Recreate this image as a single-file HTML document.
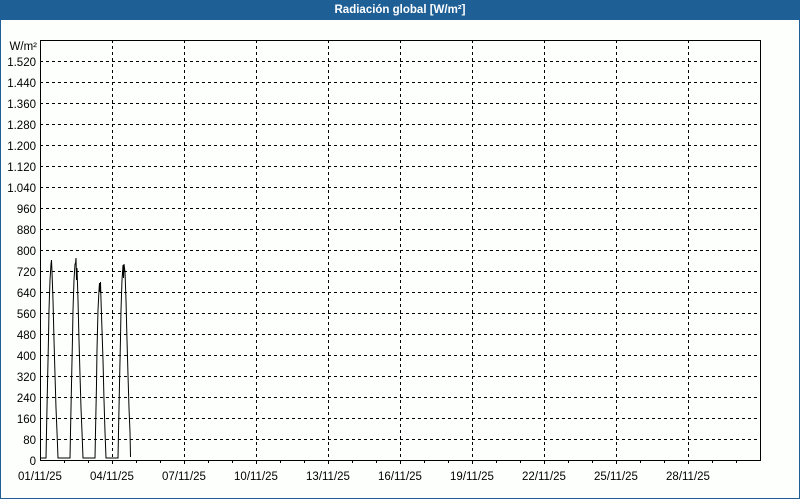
<!DOCTYPE html>
<html><head><meta charset="utf-8"><style>
html,body{margin:0;padding:0;background:#fff}
#w{position:relative;width:798px;height:498px;border:1px solid #1e5f96;border-top:none;background:#fdfffd;overflow:hidden}
#t{position:absolute;left:0;top:0;width:798px;height:20px;background:#1e5f96;color:#fff;font:bold 11.5px "Liberation Sans",sans-serif;text-align:center;line-height:21px}
svg{position:absolute;left:-1px;top:0}
text{font-family:"Liberation Sans",sans-serif;font-size:11.5px;fill:#000}
</style></head><body>
<div id="w"><div id="t">Radiación global [W/m²]</div>
<svg width="800" height="500" viewBox="0 0 800 500">
<g stroke="#000" stroke-width="1" stroke-dasharray="3,3" fill="none">
<path d="M40 439.5H760M40 418.5H760M40 397.5H760M40 376.5H760M40 355.5H760M40 334.5H760M40 313.5H760M40 292.5H760M40 271.5H760M40 250.5H760M40 229.5H760M40 208.5H760M40 187.5H760M40 166.5H760M40 145.5H760M40 124.5H760M40 103.5H760M40 82.5H760M40 61.5H760"/>
<path d="M112.5 40V460M184.5 40V460M256.5 40V460M328.5 40V460M400.5 40V460M472.5 40V460M544.5 40V460M616.5 40V460M688.5 40V460"/>
</g>
<path d="M40.5 40.5H760.5V460.5H40.5Z" stroke="#000" fill="none"/>
<path stroke="#000" d="M64.5 460v3M88.5 460v3M112.5 460v4M136.5 460v3M160.5 460v3M184.5 460v4M208.5 460v3M232.5 460v3M256.5 460v4M280.5 460v3M304.5 460v3M328.5 460v4M352.5 460v3M376.5 460v3M400.5 460v4M424.5 460v3M448.5 460v3M472.5 460v4M496.5 460v3M520.5 460v3M544.5 460v4M568.5 460v3M592.5 460v3M616.5 460v4M640.5 460v3M664.5 460v3M688.5 460v4M712.5 460v3M736.5 460v3"/>
<polyline fill="none" stroke="#000" points="41,458 46,458 46.5,432 47.5,384 48.5,338 49,310 50,280 51,264 51.5,260 52,272 53,300 54,340 55,375 56,408 57,432 58,458 70,458 70.5,432 71.5,384 72.5,338 73,310 74,280 75,264 75.5,264 76,258 76.5,280 77,268 78,300 79,340 80,375 81,408 82,432 83,458 95,458 95.5,432 96.5,384 97,350 98,310 99,290 99.5,283 100,292 100.5,282 101,300 102,330 103,360 104,400 105,432 106,458 118,458 118.5,432 119.5,384 120.5,338 121,310 122,280 123,265 123.5,278 124,264 125,272 126,300 127,340 128,375 129,408 130,432 130.5,457"/>
<g text-anchor="end">
<text x="36" y="465">0</text><text x="36" y="444">80</text><text x="36" y="423">160</text><text x="36" y="402">240</text><text x="36" y="381">320</text><text x="36" y="360">400</text><text x="36" y="339">480</text><text x="36" y="318">560</text><text x="36" y="297">640</text><text x="36" y="276">720</text><text x="36" y="255">800</text><text x="36" y="234">880</text><text x="36" y="213">960</text><text x="36" y="192">1.040</text><text x="36" y="171">1.120</text><text x="36" y="150">1.200</text><text x="36" y="129">1.280</text><text x="36" y="108">1.360</text><text x="36" y="87">1.440</text><text x="36" y="66">1.520</text><text x="37" y="50">W/m²</text>
</g>
<g text-anchor="middle" style="font-size:11px">
<text x="40" y="480">01/11/25</text><text x="112" y="480">04/11/25</text><text x="184" y="480">07/11/25</text><text x="256" y="480">10/11/25</text><text x="328" y="480">13/11/25</text><text x="400" y="480">16/11/25</text><text x="472" y="480">19/11/25</text><text x="544" y="480">22/11/25</text><text x="616" y="480">25/11/25</text><text x="688" y="480">28/11/25</text>
</g>
</svg></div>
</body></html>
